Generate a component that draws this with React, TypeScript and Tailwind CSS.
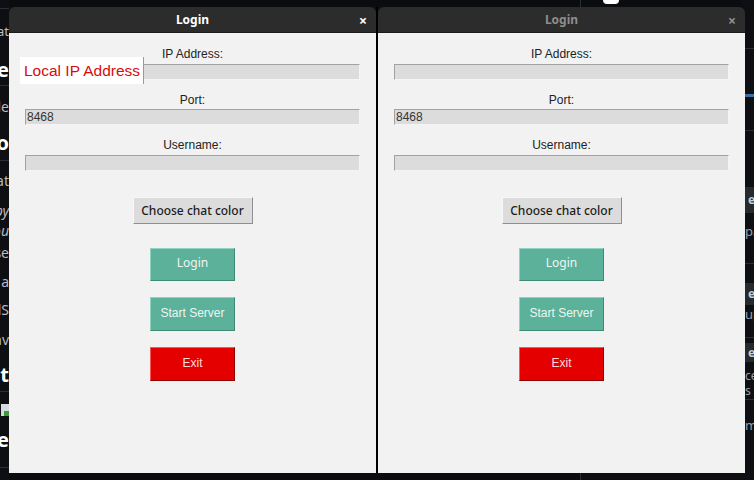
import React from 'react';

const sans = "font-['Liberation_Sans',Arial,sans-serif]";
const noto = "font-['Noto_Sans','Open_Sans',sans-serif]";

type Row = { h: number; text?: string; cls?: string; line?: boolean; block?: boolean; icon?: boolean; blue?: boolean };

const leftRows: Row[] = [
  { h: 8 },
  { h: 1, line: true },
  { h: 46, text: 'Creat', cls: 'text-[13px] text-[#b8bcc2]' },
  { h: 30, text: 'Share', cls: 'text-[20px] font-bold text-white' },
  { h: 1, line: true },
  { h: 40, text: 'file', cls: 'text-[14px] text-[#b8bcc2]' },
  { h: 34, text: 'Info', cls: 'text-[20px] font-bold text-white' },
  { h: 1, line: true },
  { h: 38, text: 'at', cls: 'text-[14px] text-[#b8bcc2]' },
  { h: 22, text: 'copy', cls: 'text-[14px] italic text-[#b8bcc2]' },
  { h: 19, text: 'you', cls: 'text-[14px] italic text-[#b8bcc2]' },
  { h: 24, text: 'use', cls: 'text-[14px] text-[#b8bcc2]' },
  { h: 34, text: 'a', cls: 'text-[14px] text-[#b8bcc2]' },
  { h: 22, text: 'lS', cls: 'text-[14px] text-[#b8bcc2]' },
  { h: 38, text: 'hav', cls: 'text-[14px] text-[#b8bcc2]' },
  { h: 33, text: 'Cont', cls: 'text-[20px] font-bold text-white' },
  { h: 1, line: true },
  { h: 36, icon: true },
  { h: 24, text: 'Tre', cls: 'text-[20px] font-bold text-white' },
  { h: 15 },
  { h: 1, line: true },
];

const rightRows: Row[] = [
  { h: 48 },
  { h: 1, line: true },
  { h: 45 },
  { h: 3, blue: true },
  { h: 33 },
  { h: 1, line: true },
  { h: 56 },
  { h: 26, block: true },
  { h: 38, text: 'pa', cls: 'text-[13px] text-[#9da1a7]' },
  { h: 12 },
  { h: 1, line: true },
  { h: 19 },
  { h: 22, block: true },
  { h: 20, text: 'up', cls: 'text-[13px] text-[#9da1a7]' },
  { h: 12 },
  { h: 1, line: true },
  { h: 5 },
  { h: 19, block: true },
  { h: 6 },
  { h: 15, text: 'ce', cls: 'text-[12px] leading-[15px] text-[#9da1a7]' },
  { h: 15, text: 's', cls: 'text-[12px] leading-[15px] text-[#9da1a7]' },
  { h: 1 },
  { h: 1, line: true },
  { h: 52, text: 'mi', cls: 'text-[13px] text-[#9da1a7]' },
];

function Strip({ rows, side }: { rows: Row[]; side: 'left' | 'right' }) {
  return (
    <div className={`w-[9px] h-full overflow-hidden flex flex-col shrink-0 ${noto}`}>
      {rows.map((r, i) => {
        if (r.line) return <div key={i} className="w-full bg-[#2b2f35]" style={{ height: r.h }} />;
        if (r.blue) return <div key={i} className="w-full bg-[#3b6ea8]" style={{ height: r.h }} />;
        if (r.block)
          return (
            <div key={i} className="w-full bg-[#26292e] flex items-center pl-[3px] text-[12px] font-bold text-[#c9ccd0]" style={{ height: r.h }}>
              e
            </div>
          );
        if (r.icon)
          return (
            <div key={i} className="w-full flex items-center justify-end" style={{ height: r.h }}>
              <div className="w-[8px] h-[12px] bg-[#d5dbe0] relative">
                <div className="absolute right-0 bottom-0 w-[5px] h-[5px] bg-[#3c9a3a]" />
              </div>
            </div>
          );
        return (
          <div
            key={i}
            className={`w-full flex items-center whitespace-nowrap overflow-hidden ${side === 'left' ? 'justify-end' : 'justify-start'} ${r.cls ?? ''}`}
            style={{ height: r.h }}
          >
            {r.text}
          </div>
        );
      })}
    </div>
  );
}

function Entry({ value }: { value?: string }) {
  return (
    <div
      className={`mx-[16px] h-[16px] bg-[#dcdcdc] border border-t-[#a2a2a2] border-l-[#a2a2a2] border-b-[#f4f4f4] border-r-[#f4f4f4] flex items-center pl-[1px] text-[12px] text-[#333] ${sans}`}
    >
      {value}
    </div>
  );
}

function Label({ text, mt }: { text: string; mt: string }) {
  return <div className={`${mt} h-[16px] leading-[16px] text-center text-[12px] text-[#222] ${sans}`}>{text}</div>;
}

function ActionButton({ text, color, mt, h, font }: { text: string; color: 'teal' | 'red'; mt: string; h: string; font: string }) {
  const c =
    color === 'teal'
      ? 'bg-[#5bb199] border-t-[#8fd2bf] border-l-[#8fd2bf] border-b-[#3f8a75] border-r-[#3f8a75] text-[#eef6f3]'
      : 'bg-[#e50000] border-t-[#f45a5a] border-l-[#f45a5a] border-b-[#8f0000] border-r-[#8f0000] text-[#ffdada]';
  return (
    <div className={`${mt} ${h} w-[85px] self-center border flex items-center justify-center pb-[3px] text-[12px] ${c} ${font}`}>
      {text}
    </div>
  );
}

function LoginWindow({ active, width, tooltip }: { active: boolean; width: string; tooltip?: boolean }) {
  return (
    <div className={`${width} h-[466px] flex flex-col shrink-0`}>
      <div className="h-[26px] bg-[#2c2c2c] rounded-t-[6px] border-b border-[#1c1c1c] flex items-center relative">
        <div className={`w-full text-center text-[12px] font-bold ${noto} ${active ? 'text-white' : 'text-[#8e8e8e]'}`}>Login</div>
        <div className={`absolute right-[9px] top-[3px] text-[14px] font-bold ${noto} ${active ? 'text-white' : 'text-[#8e8e8e]'}`}>×</div>
      </div>
      <div className="flex-1 bg-[#f2f2f2] flex flex-col pt-[13px] relative">
        <Label text="IP Address:" mt="mt-0" />
        <div className="mt-[2px]">
          <Entry />
        </div>
        <Label text="Port:" mt="mt-[12px]" />
        <div className="mt-[1px]">
          <Entry value="8468" />
        </div>
        <Label text="Username:" mt="mt-[12px]" />
        <div className="mt-[2px]">
          <Entry />
        </div>
        <div
          className={`mt-[26px] self-center w-[120px] h-[27px] bg-[#dcdcdc] border border-t-[#f7f7f7] border-l-[#f7f7f7] border-b-[#8f8f8f] border-r-[#8f8f8f] flex items-center justify-center text-[12px] font-medium text-[#1c1c1c] ${noto}`}
        >
          Choose chat color
        </div>
        <ActionButton text="Login" color="teal" mt="mt-[24px]" h="h-[33px]" font={noto} />
        <ActionButton text="Start Server" color="teal" mt="mt-[16px]" h="h-[34px]" font={sans} />
        <ActionButton text="Exit" color="red" mt="mt-[16px]" h="h-[34px]" font={sans} />
        {tooltip && (
          <div
            className={`absolute left-[11px] top-[24px] w-[124px] h-[27px] bg-white border-r border-[#9a9a9a] flex items-center pl-[4px] text-[15.5px] text-[#d80b0b] ${sans}`}
          >
            Local IP Address
          </div>
        )}
      </div>
    </div>
  );
}

export default function App() {
  return (
    <div className="w-[754px] h-[480px] bg-[#0d0f12] flex overflow-hidden">
      <Strip rows={leftRows} side="left" />
      <div className="flex flex-col">
        <div className="h-[7px] flex">
          <div className="w-[571px] h-full bg-[#0b0c0f]" />
          <div className="w-px h-full bg-[#2b2f35]" />
          <div className="w-[160px] h-full bg-[#0b0c0f] pl-[22px]">
            <div className="w-[16px] h-[4px] bg-white rounded-b-full" />
          </div>
        </div>
        <div className="flex">
          <LoginWindow active width="w-[367px]" tooltip />
          <div className="w-[2px] h-[466px] bg-black" />
          <LoginWindow active={false} width="w-[367px]" />
        </div>
        <div className="flex-1 flex">
          <div className="w-[571px] h-full bg-[#0b0c0f]" />
          <div className="w-px h-full bg-[#2b2f35]" />
        </div>
      </div>
      <Strip rows={rightRows} side="right" />
    </div>
  );
}
